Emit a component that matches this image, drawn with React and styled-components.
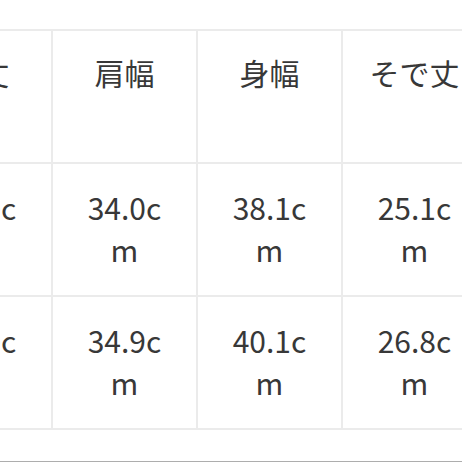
import React from "react";
import styled, { createGlobalStyle } from "styled-components";

const Global = createGlobalStyle`
  html, body { margin: 0; padding: 0; background: #fff; }
  body { font-family: "Noto Sans CJK JP", "Noto Sans", sans-serif; color: #383838; }
`;

const Frame = styled.div`
  height: 462px;
  box-sizing: border-box;
  border-bottom: 1px solid #adadad;
  overflow: hidden;
  padding-top: 29px;
`;

const Table = styled.table`
  border-collapse: separate;
  border-spacing: 0;
  table-layout: fixed;
  width: ${4 * 145 + 2}px;
  margin-left: -94px;
  border-top: 2px solid #ebebeb;
  border-left: 2px solid #ebebeb;
  font-size: 30px;
  line-height: 42px;
  color: #383838;
`;

const Cell = styled.td`
  box-sizing: border-box;
  width: 145px;
  height: 133px;
  border-right: 2px solid #ebebeb;
  border-bottom: 2px solid #ebebeb;
  text-align: center;
  vertical-align: ${(p) => (p.$head ? "top" : "middle")};
  padding: ${(p) => (p.$head ? "20px 14px 0" : "0 25px 4px")};
  word-break: break-all;
  font-weight: 400;
`;

const headers = ["着丈", "肩幅", "身幅", "そで丈"];
const rows = [
  ["45.0cm", "34.0cm", "38.1cm", "25.1cm"],
  ["46.0cm", "34.9cm", "40.1cm", "26.8cm"],
];

export default function App() {
  return (
    <>
      <Global />
      <Frame>
        <Table>
          <tbody>
            <tr>
              {headers.map((h) => (
                <Cell as="th" $head key={h}>
                  {h}
                </Cell>
              ))}
            </tr>
            {rows.map((r, i) => (
              <tr key={i}>
                {r.map((v, j) => (
                  <Cell key={j}>{v}</Cell>
                ))}
              </tr>
            ))}
          </tbody>
        </Table>
      </Frame>
    </>
  );
}
